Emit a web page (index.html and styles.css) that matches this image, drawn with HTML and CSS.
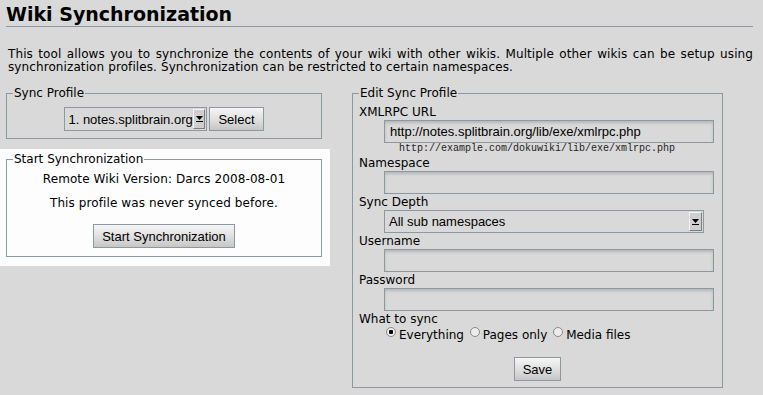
FILE: index.html
```html
<!DOCTYPE html>
<html lang="en">
<head>
    <meta charset="UTF-8">
    <title>Wiki Synchronization</title>
    <link rel="stylesheet" href="styles.css">
</head>
<body>
    <h1 class="page-title">Wiki Synchronization</h1>
    <p class="intro">This tool allows you to synchronize the contents of your wiki with other wikis. Multiple other wikis can be setup using synchronization profiles. Synchronization can be restricted to certain namespaces.</p>

    <div class="columns">
        <div class="left-col">
            <form class="profile-form">
                <fieldset class="box profile-box">
                    <legend>Sync Profile</legend>
                    <div class="select-row">
                        <span class="dropdown">
                            <span class="dropdown-value">1. notes.splitbrain.org</span>
                            <span class="dropdown-arrow"><svg width="7" height="6" viewBox="0 0 7 6"><path d="M0 0h7L3.5 4z" fill="#000"/><path d="M0 5.5h7" stroke="#000" stroke-width="1"/></svg></span>
                        </span>
                        <button type="button" class="btn">Select</button>
                    </div>
                </fieldset>
            </form>

            <div class="highlight">
                <fieldset class="box start-box">
                    <legend>Start Synchronization</legend>
                    <div class="start-body">
                        <p class="info">Remote Wiki Version: Darcs 2008-08-01</p>
                        <p class="info">This profile was never synced before.</p>
                        <button type="button" class="btn">Start Synchronization</button>
                    </div>
                </fieldset>
            </div>
        </div>

        <form class="edit-form">
            <fieldset class="box edit-box">
                <legend>Edit Sync Profile</legend>

                <label class="field-label" for="server">XMLRPC URL</label>
                <input type="text" id="server" class="edit" value="http://notes.splitbrain.org/lib/exe/xmlrpc.php">
                <code class="hint">http://example.com/dokuwiki/lib/exe/xmlrpc.php</code>

                <label class="field-label" for="ns">Namespace</label>
                <input type="text" id="ns" class="edit">

                <label class="field-label">Sync Depth</label>
                <span class="dropdown wide">
                    <span class="dropdown-value">All sub namespaces</span>
                    <span class="dropdown-arrow"><svg width="7" height="6" viewBox="0 0 7 6"><path d="M0 0h7L3.5 4z" fill="#000"/><path d="M0 5.5h7" stroke="#000" stroke-width="1"/></svg></span>
                </span>

                <label class="field-label" for="user">Username</label>
                <input type="text" id="user" class="edit">

                <label class="field-label" for="pass">Password</label>
                <input type="password" id="pass" class="edit">

                <label class="field-label">What to sync</label>
                <div class="radios">
                    <label><input type="radio" name="type" checked>Everything</label>
                    <label><input type="radio" name="type">Pages only</label>
                    <label><input type="radio" name="type">Media files</label>
                </div>

                <div class="save-row">
                    <button type="button" class="btn">Save</button>
                </div>
            </fieldset>
        </form>
    </div>
</body>
</html>
```

FILE: styles.css
```css
*{
    box-sizing: border-box;
}
body{
    margin: 0;
    background-color: #d9d9d9;
    color: #000;
    font-family: "DejaVu Sans", sans-serif;
    font-size: 12px;
}
.page-title{
    margin: 0 10px 0 6px;
    padding-top: 2px;
    font-size: 19px;
    line-height: 24px;
    font-weight: bold;
    border-bottom: 1px solid #8a9aa0;
}
.intro{
    margin: 21px 10px 0 8px;
    line-height: 13px;
    letter-spacing: 0.1px;
    text-align: justify;
}
.columns{
    display: flex;
    align-items: flex-start;
    margin-top: 11px;
}
.left-col{
    width: 330px;
}

/* fieldsets */
.box{
    margin: 0;
    border: 1px solid #8a9aa0;
    min-width: 0;
}
.box legend{
    padding: 0 1px;
    line-height: 16px;
}
.profile-box{
    margin-left: 6px;
    width: 316px;
    padding: 6px 6px 7px;
}
.select-row{
    display: flex;
    justify-content: center;
    gap: 2px;
}
.highlight{
    margin-top: 10px;
    background-color: #fdfdfd;
    padding: 2px 8px 9px 6px;
}
.start-box{
    padding: 5px 6px 8px;
}
.start-body{
    text-align: center;
}
.info{
    margin: 0 0 10px;
    line-height: 14px;
    letter-spacing: 0.1px;
}
.start-body .btn{
    margin-top: 4px;
}
.edit-form{
    margin-left: 22px;
}
.edit-box{
    width: 371px;
    padding: 3px 6px 6px;
}

/* controls */
.btn{
    height: 24px;
    padding: 0 8px;
    font-family: "Liberation Sans", Arial, sans-serif;
    font-size: 13px;
    color: #000;
    border: 1px solid #8a9aa0;
    background: linear-gradient(#f6f6f6, #dedede 55%, #c6c6c6);
    cursor: pointer;
}
.dropdown{
    display: inline-flex;
    align-items: center;
    height: 24px;
    width: 143px;
    padding-left: 3px;
    border: 1px solid #8a9aa0;
    background-color: #d9d9d9;
    font-family: "Liberation Sans", Arial, sans-serif;
    font-size: 13px;
}
.dropdown-value{
    flex: 1;
    white-space: nowrap;
}
.dropdown-arrow{
    display: flex;
    align-items: center;
    justify-content: center;
    width: 13px;
    height: 20px;
    margin-right: 1px;
    background-color: #cfcfcf;
    border-top: 1px solid #f4f4f4;
    border-left: 1px solid #f4f4f4;
    border-right: 1px solid #7e7e7e;
    border-bottom: 1px solid #7e7e7e;
}
.field-label{
    display: block;
    line-height: 16px;
}
.edit{
    display: block;
    margin-left: 25px;
    width: 330px;
    height: 23px;
    padding: 0 5px;
    border: 1px solid #8a9aa0;
    background-color: #d9d9d9;
    box-shadow: inset 0 2px 3px rgba(0, 0, 0, 0.16);
    font-family: "Liberation Sans", Arial, sans-serif;
    font-size: 13px;
    color: #000;
    outline: none;
}
.hint{
    display: block;
    margin-left: 40px;
    height: 12px;
    font-family: "Liberation Mono", monospace;
    font-size: 10px;
    line-height: 12px;
    color: #222;
}
.dropdown.wide{
    display: flex;
    margin-left: 25px;
    width: 320px;
    height: 23px;
    padding-left: 4px;
}
.dropdown.wide .dropdown-arrow{
    height: 19px;
}
.radios{
    padding-left: 25px;
    height: 16px;
    line-height: 16px;
}
.radios input{
    appearance: none;
    width: 10px;
    height: 10px;
    margin: 0 3px 0 2px;
    border: 1px solid #8a8a8a;
    border-radius: 50%;
    background-color: #ececec;
    vertical-align: 2px;
}
.radios input:checked{
    background: radial-gradient(circle, #000 2px, #ececec 2.5px);
}
.save-row{
    margin-top: 14px;
    text-align: center;
}
```
